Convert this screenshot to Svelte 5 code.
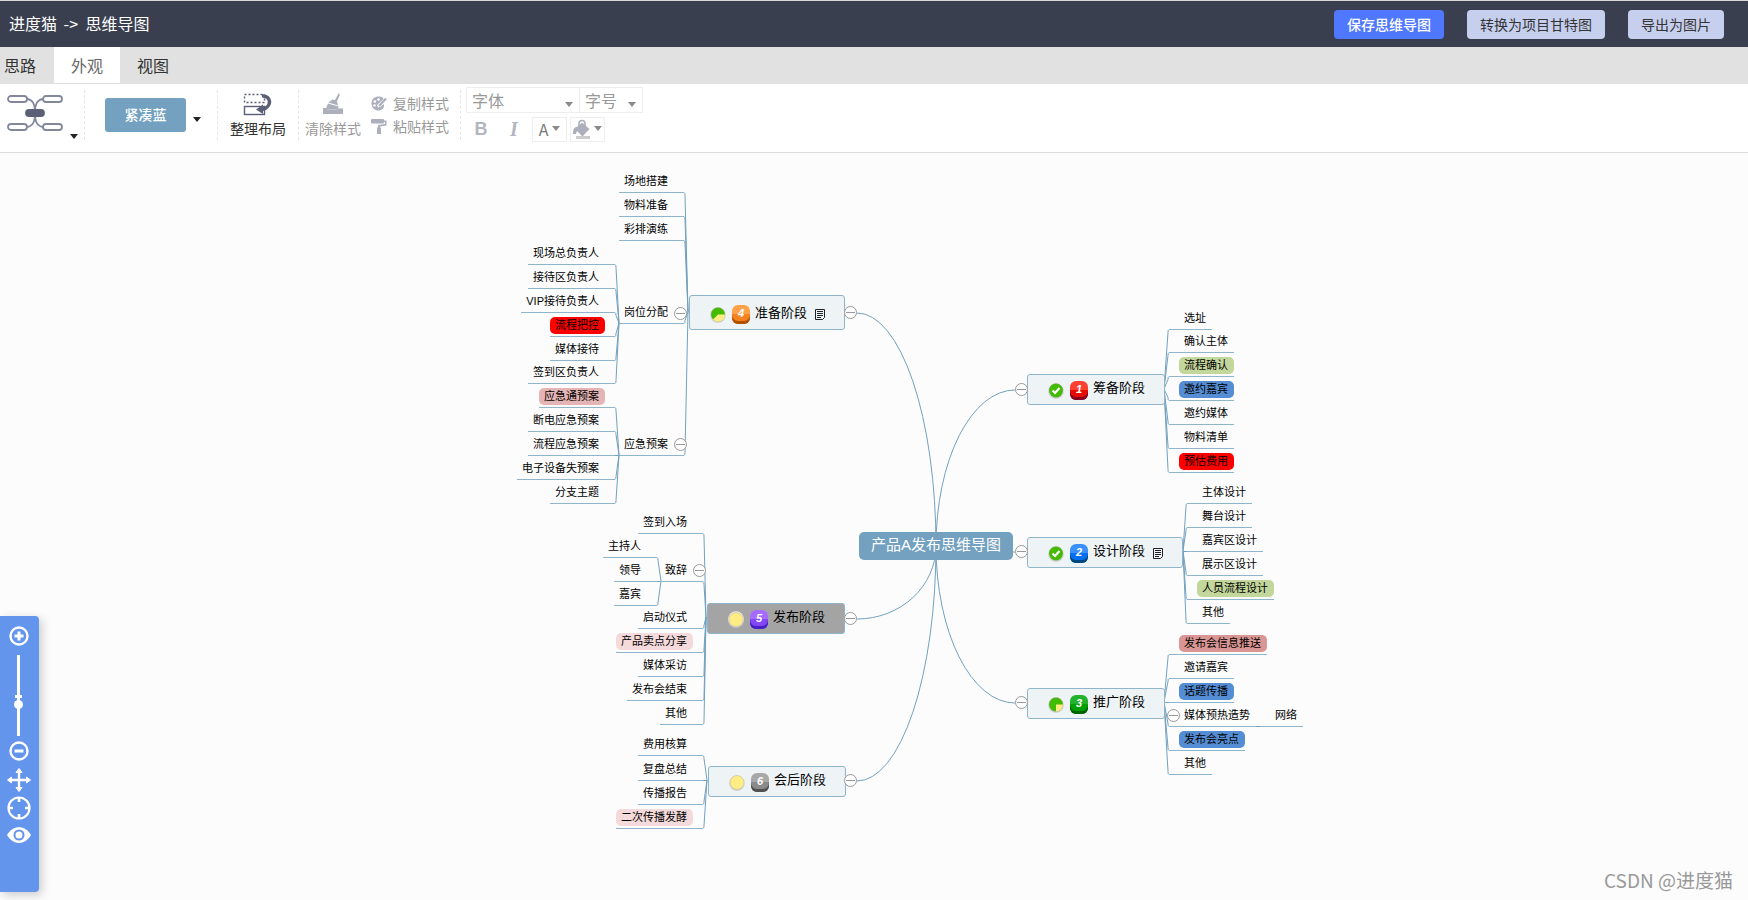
<script>
  const pink = "#f4dada";
  const rose = "#e5b5b5";
  const red = "#ff0000";
  const green = "#c3d69b";
  const blue = "#548dd4";

  // joint = where the child lines meet, edge = inner end of each underline
  const branches = [
    {
      side: "left",
      edge: 684,
      joint: [688, 159],
      leaves: [
        { text: "场地搭建", y: 39 },
        { text: "物料准备", y: 63 },
        { text: "彩排演练", y: 87 },
        { text: "岗位分配", y: 170 },
        { text: "应急预案", y: 302 },
      ],
    },
    {
      side: "left",
      edge: 615,
      joint: [619, 170],
      leaves: [
        { text: "现场总负责人", y: 111 },
        { text: "接待区负责人", y: 135 },
        { text: "VIP接待负责人", y: 159 },
        { text: "流程把控", y: 183, fill: red },
        { text: "媒体接待", y: 207 },
        { text: "签到区负责人", y: 230 },
      ],
    },
    {
      side: "left",
      edge: 615,
      joint: [619, 302],
      leaves: [
        { text: "应急通预案", y: 254, fill: rose },
        { text: "断电应急预案", y: 278 },
        { text: "流程应急预案", y: 302 },
        { text: "电子设备失预案", y: 326 },
        { text: "分支主题", y: 350 },
      ],
    },
    {
      side: "left",
      edge: 703,
      joint: [706, 464],
      leaves: [
        { text: "签到入场", y: 380 },
        { text: "致辞", y: 428 },
        { text: "启动仪式", y: 475 },
        { text: "产品卖点分享", y: 499, fill: pink },
        { text: "媒体采访", y: 523 },
        { text: "发布会结束", y: 547 },
        { text: "其他", y: 571 },
      ],
    },
    {
      side: "left",
      edge: 657,
      joint: [661, 428],
      leaves: [
        { text: "主持人", y: 404 },
        { text: "领导", y: 428 },
        { text: "嘉宾", y: 452 },
      ],
    },
    {
      side: "left",
      edge: 703,
      joint: [707, 627],
      leaves: [
        { text: "费用核算", y: 602 },
        { text: "复盘总结", y: 627 },
        { text: "传播报告", y: 651 },
        { text: "二次传播发酵", y: 675, fill: pink },
      ],
    },
    {
      side: "right",
      edge: 1169,
      joint: [1164, 236],
      leaves: [
        { text: "选址", y: 176 },
        { text: "确认主体", y: 199 },
        { text: "流程确认", y: 223, fill: green },
        { text: "邀约嘉宾", y: 247, fill: blue },
        { text: "邀约媒体", y: 271 },
        { text: "物料清单", y: 295 },
        { text: "预估费用", y: 319, fill: red },
      ],
    },
    {
      side: "right",
      edge: 1187,
      joint: [1183, 398],
      leaves: [
        { text: "主体设计", y: 350 },
        { text: "舞台设计", y: 374 },
        { text: "嘉宾区设计", y: 398 },
        { text: "展示区设计", y: 422 },
        { text: "人员流程设计", y: 446, fill: green },
        { text: "其他", y: 470 },
      ],
    },
    {
      side: "right",
      edge: 1169,
      joint: [1164, 549],
      leaves: [
        { text: "发布会信息推送", y: 501, fill: "#d99694" },
        { text: "邀请嘉宾", y: 525 },
        { text: "话题传播", y: 549, fill: blue },
        { text: "媒体预热造势", y: 573 },
        { text: "发布会亮点", y: 597, fill: blue },
        { text: "其他", y: 621 },
      ],
    },
    {
      side: "right",
      edge: 1260,
      joint: [1255, 573],
      leaves: [{ text: "网络", y: 573 }],
    },
  ];

  const stages = [
    { n: 1, text: "筹备阶段", x: 1027, y: 221, progress: "done" },
    { n: 2, text: "设计阶段", x: 1027, y: 384, progress: "done", note: true },
    { n: 3, text: "推广阶段", x: 1027, y: 535, progress: "most" },
    { n: 4, text: "准备阶段", x: 689, y: 142, progress: "half", note: true, tall: true },
    { n: 5, text: "发布阶段", x: 707, y: 450, progress: "none", selected: true },
    { n: 6, text: "会后阶段", x: 708, y: 613, progress: "none" },
  ];

  const toggles = [
    [1021, 237], [1021, 399], [1021, 550], [850, 160], [850, 466], [850, 628],
    [680, 161], [680, 292], [699, 418], [1173, 563],
  ];

  const root = { x: 936, y: 393 };
  const trunks = [
    [857, 160], [857, 466], [857, 628], [1015, 237], [1015, 399], [1015, 550],
  ];

  const mapWidth = 1320;

  function arc([x, y]) {
    const rx = Math.abs(x - root.x);
    const ry = Math.abs(y - root.y);
    const sweep = x > root.x === y < root.y ? 1 : 0;
    return `M${root.x} ${root.y}A${rx} ${ry} 0 0 ${sweep} ${x} ${y}`;
  }

  function twig(branch, y) {
    const [jx, jy] = branch.joint;
    const ly = y + 0.5;
    if (Math.abs(y - jy) < 2) return `M${jx} ${ly}H${branch.edge}`;
    const dir = y < jy ? 3 : -3;
    const bend = branch.side === "left" ? branch.edge + 1 : branch.edge - 1;
    return `M${jx} ${jy}L${bend} ${ly + dir}Q${bend} ${ly} ${branch.edge} ${ly}`;
  }

  let tab = $state("外观");
  let zoom = $state(62);
</script>

<div class="app">
  <header>
    <h1>进度猫 <span>-&gt;</span> 思维导图</h1>
    <div class="actions">
      <button class="action primary">保存思维导图</button>
      <button class="action">转换为项目甘特图</button>
      <button class="action">导出为图片</button>
    </div>
  </header>

  <nav>
    {#each ["思路", "外观", "视图"] as name}
      <button class="tab" class:active={tab === name} onclick={() => (tab = name)}>{name}</button>
    {/each}
  </nav>

  <div class="toolbar">
    <div class="group structure">
      <button class="bare" aria-label="结构">
        <svg width="56" height="38" viewBox="0 0 56 38" fill="none" stroke="#83879c" stroke-width="1.8">
          <rect x="1" y="2" width="19" height="6" rx="3" />
          <rect x="36" y="2" width="19" height="6" rx="3" />
          <rect x="1" y="30" width="19" height="6" rx="3" />
          <rect x="36" y="30" width="19" height="6" rx="3" />
          <path d="M20 5c7 1 8 7 8 14s-1 13-8 14M36 5c-7 1-8 7-8 14s1 13 8 14" />
          <rect x="19" y="16" width="18" height="6" rx="3" fill="#5b6078" stroke="#5b6078" />
        </svg>
      </button>
      <i class="caret low"></i>
    </div>
    <div class="group theme">
      <button class="theme-button">紧凑蓝</button>
      <i class="caret"></i>
    </div>
    <div class="group">
      <button class="bare stacked">
        <svg width="30" height="24" viewBox="0 0 30 24" fill="none" stroke="#5b6078">
          <rect x="1.5" y="2.5" width="20" height="8" stroke-width="1.4" stroke-dasharray="2 2" />
          <rect x="1.5" y="14.5" width="20" height="8" stroke-width="1.4" />
          <path d="M19 4c9-1 11 11 0 13.5" stroke-width="3.6" />
          <path d="M20 12.5v9.5l-7-4.500z" fill="#5b6078" stroke="none" />
        </svg>
        整理布局
      </button>
    </div>
    <div class="group muted">
      <button class="bare stacked">
        <svg width="22" height="24" viewBox="0 0 22 24" fill="#adb0bc">
          <path d="M16.5 1.5l1.5 1-3 7 1 4-9.5-3 4-3 2.5.5z" />
          <path d="M6 11.5l10.5 3-.5 3H3.5z" />
          <path d="M1 16h3l1 1.5h10l1-1H21v5.5H1z" />
        </svg>
        清除样式
      </button>
      <div class="styles">
        <button class="bare">
          <svg width="16" height="15" viewBox="0 0 16 15">
            <path d="M8 .5c3 0 4 1 4.500 2.500L6 9l1 2.500 2-.5 4-3c.5 4-2 6.500-5.500 6.500S.5 12 .5 7.500 3.500.5 8 .5z" fill="#adb0bc" />
            <circle cx="7.500" cy="3.500" r="1.300" fill="#fff" />
            <circle cx="3.800" cy="5.500" r="1.300" fill="#fff" />
            <circle cx="3.500" cy="9.500" r="1.300" fill="#fff" />
            <path d="M15 2.500L8 10" stroke="#adb0bc" stroke-width="2.400" />
          </svg>
          复制样式
        </button>
        <button class="bare">
          <svg width="16" height="15" viewBox="0 0 16 15" fill="#adb0bc">
            <rect x="0" y="0" width="13" height="4.500" rx="1" />
            <path d="M13 1.500h2.500V6.500L9 7.500V9H7V6l7-1V3h-1z" />
            <rect x="6" y="8.500" width="4" height="6.500" />
          </svg>
          粘贴样式
        </button>
      </div>
    </div>
    <div class="fonts">
      <div class="row">
        <span class="pick family">
          <select aria-label="字体"><option>字体</option></select><i class="caret"></i>
        </span>
        <span class="pick size">
          <select aria-label="字号"><option>字号</option></select><i class="caret"></i>
        </span>
      </div>
      <div class="row marks">
        <button class="mark bold">B</button>
        <button class="mark italic">I</button>
        <button class="colour">A <i class="caret"></i></button>
        <button class="colour" aria-label="背景颜色">
          <svg width="17" height="20" viewBox="0 0 17 20">
            <path d="M6 8V4.500a3 3 0 016 0V8" fill="none" stroke="#adb0bc" stroke-width="1.600" />
            <path d="M9 3.500l7.500 6.500-7 7.500L4 12l-1 3H0c0-5 1-7 4-7z" fill="#adb0bc" />
            <path d="M3 18.500h14" stroke="#ccc" stroke-width="3" />
          </svg>
          <i class="caret"></i>
        </button>
      </div>
    </div>
  </div>

  <main>
    <div class="map">
      <svg class="lines" aria-hidden="true">
        {#each trunks as trunk}
          <path d={arc(trunk)} />
        {/each}
        {#each branches as branch}
          {#each branch.leaves as leaf}
            <path d={twig(branch, leaf.y)} />
          {/each}
        {/each}
      </svg>

      {#each branches as branch}
        {#each branch.leaves as leaf}
          <div
            class="leaf {branch.side}"
            style:top="{leaf.y - 19}px"
            style:left={branch.side === "right" ? `${branch.edge}px` : null}
            style:right={branch.side === "left" ? `${mapWidth - branch.edge}px` : null}
          >
            <span style:background={leaf.fill}>{leaf.text}</span>
          </div>
        {/each}
      {/each}

      <div class="root">产品A发布思维导图</div>

      {#each stages as stage}
        <div
          class="stage"
          class:selected={stage.selected}
          class:tall={stage.tall}
          style:left="{stage.x}px"
          style:top="{stage.y}px"
        >
          <svg class="progress" width="16" height="17" viewBox="0 0 16 17">
            <circle cx="8" cy="9" r="7.800" fill="#c8c8c8" />
            <circle cx="8" cy="8" r="7.800" fill="#f2f2f2" />
            <circle cx="8" cy="8.500" r="7" fill={stage.progress === "none" ? "#ffed83" : "#43bc00"} stroke="#999" stroke-width="0.400" />
            {#if stage.progress === "done"}
              <path d="M4.500 8.500l2.500 2.500 4.500-5" fill="none" stroke="#fff" stroke-width="2.200" />
            {:else if stage.progress === "most"}
              <path d="M8 8.500h7A7 7 0 018 15.500z" fill="#ffed83" />
            {:else if stage.progress === "half"}
              <path d="M8 8.500h7A7 7 0 013 13.500z" fill="#ffed83" />
            {/if}
          </svg>
          <b class="priority p{stage.n}">{stage.n}</b>
          <span>{stage.text}</span>
          {#if stage.note}
            <svg class="note" width="10" height="11" viewBox="0 0 10 11" fill="none" stroke="#222">
              <path d="M.5.5h9v8l-2 2h-7zM2 2.500h6M2 4.500h6M2 6.500h6M2 8.500h4" />
            </svg>
          {/if}
        </div>
      {/each}

      {#each toggles as [x, y]}
        <button class="toggle" aria-label="收起" style:left="{x - 6}px" style:top="{y - 7}px"></button>
      {/each}
    </div>

    <aside>
      <button class="bare" aria-label="放大">
        <svg width="20" height="20" viewBox="0 0 20 20" fill="none" stroke="#fff">
          <circle cx="10" cy="10" r="8.500" stroke-width="2.400" />
          <path d="M10 5.500v9M5.500 10h9" stroke-width="3" />
        </svg>
      </button>
      <div class="slider">
        <input type="range" aria-label="缩放" min="0" max="100" bind:value={zoom} />
      </div>
      <button class="bare" aria-label="缩小">
        <svg width="20" height="20" viewBox="0 0 20 20" fill="none" stroke="#fff">
          <circle cx="10" cy="10" r="8.500" stroke-width="2.400" />
          <path d="M5.500 10h9" stroke-width="3" />
        </svg>
      </button>
      <button class="bare move" aria-label="移动">
        <svg width="24" height="24" viewBox="0 0 24 24" fill="#fff" stroke="#fff">
          <path d="M12 3v18M3 12h18" stroke-width="2.400" />
          <path d="M12 .5l3 4H9zM12 23.500l3-4H9zM.5 12l4-3v6zM23.500 12l-4-3v6z" stroke-linejoin="round" />
        </svg>
      </button>
      <button class="bare" aria-label="居中">
        <svg width="24" height="24" viewBox="0 0 24 24" fill="none" stroke="#fff">
          <circle cx="12" cy="12" r="10.500" stroke-width="2.200" />
          <path d="M12 1v5M12 18v5M1 12h5M18 12h5" stroke-width="2.600" />
        </svg>
      </button>
      <button class="bare eye" aria-label="预览">
        <svg width="24" height="18" viewBox="0 0 24 18">
          <path d="M0 9C6-1.500 18-1.500 24 9 18 19.500 6 19.500 0 9z" fill="#fff" />
          <circle cx="12" cy="9" r="4.500" fill="#fff" stroke="#6495ed" stroke-width="2" />
        </svg>
      </button>
    </aside>

    <p class="watermark">CSDN @进度猫</p>
  </main>
</div>

<style>
  :global(body) {
    margin: 0;
  }
  .app {
    min-height: 100vh;
    display: flex;
    flex-direction: column;
    font-family: "Noto Sans CJK SC", sans-serif;
    font-size: 14px;
    color: #333;
  }
  button,
  select {
    font: inherit;
    color: inherit;
    cursor: pointer;
  }
  svg {
    display: block;
  }
  header {
    height: 46px;
    display: flex;
    align-items: center;
    justify-content: space-between;
    padding: 0 24px 0 9px;
    background: #3a3f4f;
    border-top: 1px solid #d8d8d8;
  }
  h1 {
    margin: 0;
    padding-bottom: 2px;
    font-size: 16px;
    font-weight: 400;
    color: #fff;
  }
  h1 span {
    margin: 0 4px 0 3px;
  }
  .actions {
    display: flex;
    gap: 23px;
  }
  .action {
    height: 29px;
    padding: 0 13px;
    border: 0;
    border-radius: 4px;
    background: #c6cfee;
    line-height: 27px;
  }
  .action.primary {
    background: #4f78ff;
    color: #fff;
    font-weight: 500;
  }
  nav {
    display: flex;
    height: 37px;
    background: #e1e1e1;
  }
  .tab {
    height: 36px;
    padding: 0 17px;
    border: 0;
    background: none;
    font-size: 16px;
    line-height: 35px;
  }
  .tab:first-child {
    padding: 0 18px 0 4px;
  }
  .tab.active {
    background: #fff;
    color: #666;
  }
  .toolbar {
    display: flex;
    height: 68px;
    border-bottom: 1px solid #ddd;
    background: #fff;
  }
  .group {
    display: flex;
    align-items: center;
    height: 50px;
    margin-top: 6px;
    padding: 0 12px;
    border-right: 1px dashed #e5e5e5;
  }
  .bare {
    display: flex;
    align-items: center;
    padding: 0;
    border: 0;
    background: none;
  }
  .stacked {
    flex-direction: column;
    gap: 1px;
    padding-top: 1px;
    line-height: 22px;
  }
  .caret {
    border: 4px solid transparent;
    border-top: 5px solid #222;
    border-bottom: 0;
  }
  .structure {
    padding: 0 6px 0 7px;
    gap: 7px;
  }
  .structure .bare {
    margin-top: -5px;
  }
  .caret.low {
    align-self: flex-end;
    margin-bottom: 1px;
  }
  .theme {
    padding: 0 16px 0 20px;
    gap: 7px;
  }
  .theme .caret {
    margin-top: 8px;
  }
  .theme-button {
    width: 81px;
    height: 34px;
    padding: 0 0 2px;
    border: 0;
    border-radius: 3px;
    background: #73a1bf;
    color: #fff;
    font-weight: 500;
  }
  .muted {
    gap: 10px;
    padding: 0 11px 0 6px;
    color: #999;
  }
  .styles .bare {
    gap: 6px;
    line-height: 23px;
  }
  .fonts {
    padding: 3px 0 0 5px;
    color: #999;
  }
  .fonts .caret {
    border-top-color: #8a8a8a;
  }
  .row {
    display: flex;
  }
  .pick {
    display: flex;
    align-items: center;
    box-sizing: border-box;
    height: 26px;
    padding-right: 6px;
    border: 1px solid #eee;
  }
  .pick.family {
    width: 114px;
  }
  .pick.size {
    width: 63px;
    border-left: 0;
  }
  .pick .caret {
    margin-top: 8px;
  }
  select {
    flex: 1;
    min-width: 0;
    padding: 0 0 0 5px;
    border: 0;
    background: none;
    appearance: none;
    font-size: 16px;
    line-height: 24px;
  }
  .marks {
    align-items: center;
    margin-top: 4px;
    gap: 3px;
  }
  .mark {
    width: 30px;
    padding: 0;
    border: 0;
    background: none;
    color: #b3b6c1;
    font-family: "Liberation Sans", sans-serif;
    font-size: 18px;
    font-weight: 700;
  }
  .mark.italic {
    font-family: "Liberation Serif", serif;
    font-style: italic;
    font-size: 20px;
  }
  .colour {
    display: flex;
    align-items: center;
    justify-content: center;
    gap: 4px;
    box-sizing: border-box;
    width: 35px;
    height: 25px;
    padding: 0 0 2px;
    border: 1px solid #eee;
    background: none;
    color: #777;
    font-size: 16px;
    line-height: 20px;
  }
  main {
    flex: 1;
    position: relative;
    overflow: hidden;
    background: #fcfcfc;
  }
  .map {
    position: relative;
    width: 1320px;
    height: 720px;
    font-family: "Liberation Sans", "Noto Sans CJK SC", sans-serif;
    color: #000;
  }
  .lines {
    width: 100%;
    height: 100%;
    fill: none;
    stroke: #73a1bf;
    stroke-width: 1;
  }
  .leaf {
    position: absolute;
    height: 19px;
    border-bottom: 1px solid #8fb5cd;
    font-size: 11px;
    line-height: 16px;
    white-space: nowrap;
  }
  .leaf span {
    display: block;
    height: 17px;
    padding: 0 6px 0 5px;
    border-radius: 5px;
  }
  .leaf.left {
    padding-right: 10px;
  }
  .leaf.right {
    padding-left: 10px;
  }
  .root {
    position: absolute;
    left: 859px;
    top: 379px;
    width: 154px;
    height: 28px;
    border-radius: 5px;
    background: #73a1bf;
    color: #fff;
    font-size: 15px;
    line-height: 25px;
    text-align: center;
    white-space: nowrap;
  }
  .stage {
    position: absolute;
    display: flex;
    align-items: center;
    box-sizing: border-box;
    height: 31px;
    padding: 0 19px 1px 20px;
    border: 1px solid #8fb5cd;
    border-radius: 3px;
    background: #eef3f6;
    font-size: 13px;
    line-height: 26px;
    white-space: nowrap;
  }
  .stage.tall {
    height: 35px;
    padding-top: 3px;
  }
  .stage.selected {
    background: #a4a4a4;
  }
  .stage span {
    margin-bottom: 2px;
  }
  .progress {
    margin-top: 2px;
  }
  .priority {
    width: 18px;
    height: 19px;
    margin: 2px 5px 0 6px;
    border-radius: 6px;
    box-shadow: inset 0 -3px var(--base);
    background: linear-gradient(var(--light) 45%, var(--main) 45%);
    color: #fff;
    font-size: 11px;
    font-style: italic;
    line-height: 17px;
    text-align: center;
  }
  .p1 {
    --light: #ff4033;
    --main: #e60a00;
    --base: #840023;
  }
  .p2 {
    --light: #3a90ff;
    --main: #0070f0;
    --base: #01467f;
  }
  .p3 {
    --light: #24b12d;
    --main: #00a000;
    --base: #006300;
  }
  .p4 {
    --light: #ffa04a;
    --main: #f28320;
    --base: #b25000;
  }
  .p5 {
    --light: #a66cff;
    --main: #8347f5;
    --base: #4720c4;
  }
  .p6 {
    --light: #a8a8a8;
    --main: #8a8a8a;
    --base: #515151;
  }
  .note {
    margin: 2px 0 0 8px;
  }
  .toggle {
    position: absolute;
    box-sizing: border-box;
    width: 13px;
    height: 13px;
    padding: 0;
    border: 1px solid #999;
    border-radius: 50%;
    background: linear-gradient(#999, #999) center / 9px 1px no-repeat #fff;
  }
  aside {
    position: absolute;
    left: 0;
    bottom: 8px;
    display: flex;
    flex-direction: column;
    align-items: center;
    box-sizing: border-box;
    width: 39px;
    height: 276px;
    padding: 10px 2px 0 0;
    border-radius: 0 4px 4px 0;
    background: #6495ed;
    box-shadow: 3px 3px 10px #ccc;
  }
  .slider {
    position: relative;
    display: flex;
    justify-content: center;
    width: 9px;
    height: 81px;
    margin: 9px 0 5px;
  }
  .slider::before {
    content: "";
    position: absolute;
    top: 40px;
    left: 1px;
    width: 7px;
    height: 3px;
    background: #fff;
  }
  input {
    width: 9px;
    height: 81px;
    margin: 0;
    appearance: none;
    writing-mode: vertical-lr;
    background: linear-gradient(#fff, #fff) center / 3px 100% no-repeat;
  }
  input::-webkit-slider-thumb {
    appearance: none;
    width: 9px;
    height: 9px;
    border-radius: 50%;
    background: #fff;
  }
  .move {
    margin: 7px 0 4px;
  }
  .eye {
    margin-top: 6px;
  }
  .watermark {
    position: absolute;
    right: 15px;
    bottom: 6px;
    margin: 0;
    color: #999;
    font-size: 19px;
    line-height: 28px;
  }
</style>
